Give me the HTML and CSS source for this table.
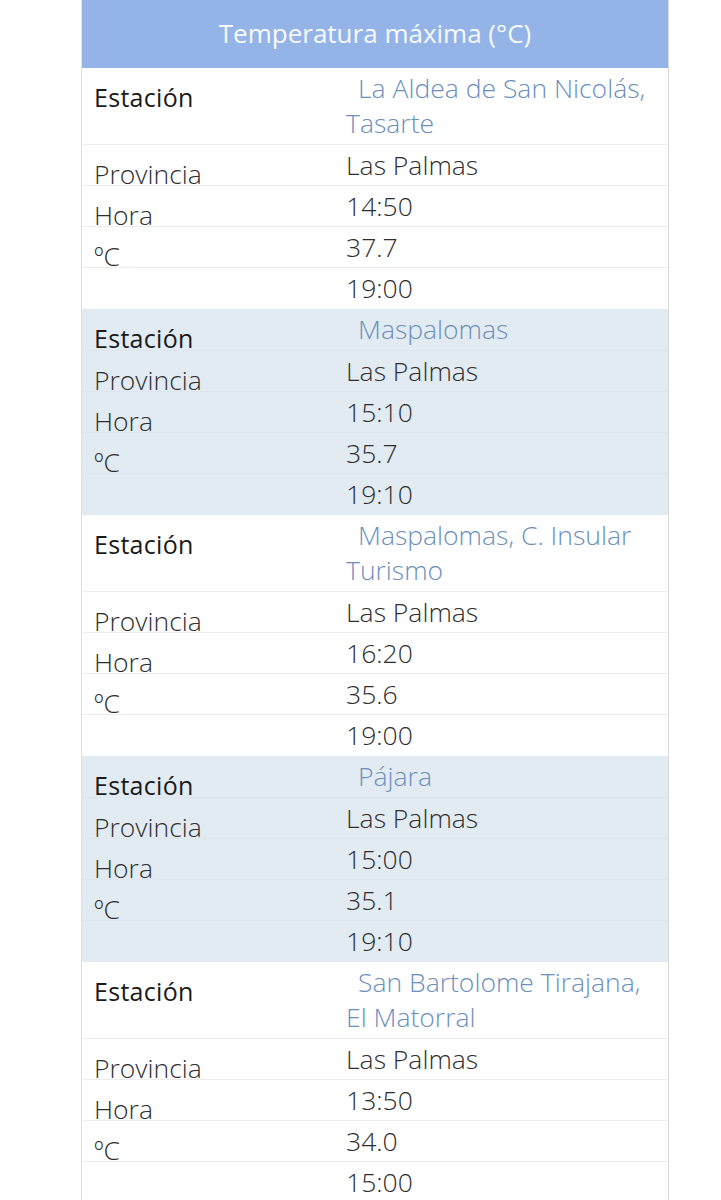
FILE: index.html
```html
<!DOCTYPE html>
<html lang="es">
<head>
<meta charset="utf-8">
<title>Temperatura máxima</title>
<link rel="stylesheet" href="styles.css">
</head>
<body>
<div class="table">
  <div class="head">Temperatura máxima (°C)</div>

  <section class="block">
    <div class="row"><div class="label strong">Estación</div><div class="value name">La Aldea de San Nicolás, Tasarte</div></div>
    <div class="row"><div class="label">Provincia</div><div class="value">Las Palmas</div></div>
    <div class="row"><div class="label">Hora</div><div class="value">14:50</div></div>
    <div class="row"><div class="label">ºC</div><div class="value">37.7</div></div>
    <div class="row"><div class="label"></div><div class="value">19:00</div></div>
  </section>

  <section class="block shaded">
    <div class="row"><div class="label strong">Estación</div><div class="value name">Maspalomas</div></div>
    <div class="row"><div class="label">Provincia</div><div class="value">Las Palmas</div></div>
    <div class="row"><div class="label">Hora</div><div class="value">15:10</div></div>
    <div class="row"><div class="label">ºC</div><div class="value">35.7</div></div>
    <div class="row"><div class="label"></div><div class="value">19:10</div></div>
  </section>

  <section class="block">
    <div class="row"><div class="label strong">Estación</div><div class="value name">Maspalomas, C. Insular Turismo</div></div>
    <div class="row"><div class="label">Provincia</div><div class="value">Las Palmas</div></div>
    <div class="row"><div class="label">Hora</div><div class="value">16:20</div></div>
    <div class="row"><div class="label">ºC</div><div class="value">35.6</div></div>
    <div class="row"><div class="label"></div><div class="value">19:00</div></div>
  </section>

  <section class="block shaded">
    <div class="row"><div class="label strong">Estación</div><div class="value name">Pájara</div></div>
    <div class="row"><div class="label">Provincia</div><div class="value">Las Palmas</div></div>
    <div class="row"><div class="label">Hora</div><div class="value">15:00</div></div>
    <div class="row"><div class="label">ºC</div><div class="value">35.1</div></div>
    <div class="row"><div class="label"></div><div class="value">19:10</div></div>
  </section>

  <section class="block">
    <div class="row"><div class="label strong">Estación</div><div class="value name">San Bartolome Tirajana, El Matorral</div></div>
    <div class="row"><div class="label">Provincia</div><div class="value">Las Palmas</div></div>
    <div class="row"><div class="label">Hora</div><div class="value">13:50</div></div>
    <div class="row"><div class="label">ºC</div><div class="value">34.0</div></div>
    <div class="row"><div class="label"></div><div class="value">15:00</div></div>
  </section>
</div>
</body>
</html>
```

FILE: styles.css
```css
html, body {
  margin: 0;
  padding: 0;
  background: #ffffff;
}

body {
  font-family: "Open Sans", "Noto Sans", "Liberation Sans", sans-serif;
  font-size: 26.5px;
  font-weight: 300;
  color: #2e2e2e;
  height: 1200px;
  overflow: hidden;
}

.table {
  margin-left: 81px;
  width: 588px;
  box-sizing: border-box;
  border-left: 1px solid #e2e2e2;
  border-right: 1px solid #d8d8d8;
}

.head {
  height: 68px;
  background: #94b4e7;
  color: #f6f9ff;
  text-align: center;
  line-height: 66px;
  font-size: 26px;
  font-weight: 400;
}

.block.shaded {
  background: #e2ebf2;
}

.row {
  display: grid;
  grid-template-columns: 264px 1fr;
  min-height: 41px;
  box-sizing: border-box;
  border-bottom: 1px solid #ececec;
  align-items: start;
}

.shaded .row {
  border-bottom-color: #dde6ee;
}

.block .row:last-child {
  border-bottom: none;
}

.label {
  padding-left: 12px;
  padding-top: 12px;
  line-height: 35px;
  height: 28px;
  overflow: visible;
  white-space: nowrap;
  color: #2e2e2e;
}

.label.strong {
  color: #1a1a1a;
  font-size: 25px;
  font-weight: 400;
  letter-spacing: 0.3px;
}

.value {
  padding-top: 3px;
  padding-bottom: 2px;
  line-height: 35px;
  padding-right: 14px;
}

.value.name {
  color: #6c8fbd;
  text-indent: 12px;
  padding-bottom: 3px;
}
```
